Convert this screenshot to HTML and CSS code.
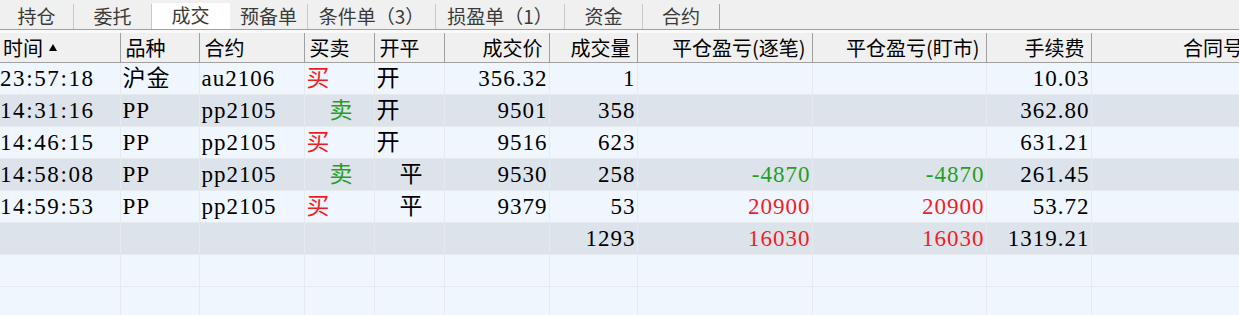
FILE: index.html
```html
<!DOCTYPE html>
<html lang="zh-CN">
    <head>
        <meta charset="UTF-8">
        <meta name="viewport" content="width=device-width, initial-scale=1.0">
        <title>成交</title>
        <link rel="stylesheet" href="styles.css">
    </head>
    <body>
        <nav class="tabs">
            <span class="tab w74">持仓</span>
            <span class="tab w78">委托</span>
            <span class="tab w78 active">成交</span>
            <span class="tab w78">预备单</span>
            <span class="tab w128">条件单（3）</span>
            <span class="tab w129">损盈单（1）</span>
            <span class="tab w78">资金</span>
            <span class="tab w77">合约</span>
        </nav>

        <table class="trades">
            <colgroup>
                <col style="width:120px">
                <col style="width:79px">
                <col style="width:105px">
                <col style="width:70px">
                <col style="width:70px">
                <col style="width:105px">
                <col style="width:88px">
                <col style="width:175px">
                <col style="width:174px">
                <col style="width:105px">
                <col style="width:158px">
            </colgroup>
            <thead>
                <tr>
                    <th>时间<i class="sort"></i></th>
                    <th>品种</th>
                    <th>合约</th>
                    <th>买卖</th>
                    <th>开平</th>
                    <th class="num">成交价</th>
                    <th class="num">成交量</th>
                    <th class="num">平仓盈亏(逐笔)</th>
                    <th class="num">平仓盈亏(盯市)</th>
                    <th class="num">手续费</th>
                    <th class="num">合同号</th>
                </tr>
            </thead>
            <tbody>
                <tr>
                    <td class="time">23:57:18</td>
                    <td>沪金</td>
                    <td>au2106</td>
                    <td class="buy">买</td>
                    <td>开</td>
                    <td class="num">356.32</td>
                    <td class="num">1</td>
                    <td class="num"></td>
                    <td class="num"></td>
                    <td class="num">10.03</td>
                    <td></td>
                </tr>
                <tr class="alt">
                    <td class="time">14:31:16</td>
                    <td>PP</td>
                    <td>pp2105</td>
                    <td class="sell">卖</td>
                    <td>开</td>
                    <td class="num">9501</td>
                    <td class="num">358</td>
                    <td class="num"></td>
                    <td class="num"></td>
                    <td class="num">362.80</td>
                    <td></td>
                </tr>
                <tr>
                    <td class="time">14:46:15</td>
                    <td>PP</td>
                    <td>pp2105</td>
                    <td class="buy">买</td>
                    <td>开</td>
                    <td class="num">9516</td>
                    <td class="num">623</td>
                    <td class="num"></td>
                    <td class="num"></td>
                    <td class="num">631.21</td>
                    <td></td>
                </tr>
                <tr class="alt">
                    <td class="time">14:58:08</td>
                    <td>PP</td>
                    <td>pp2105</td>
                    <td class="sell">卖</td>
                    <td class="close">平</td>
                    <td class="num">9530</td>
                    <td class="num">258</td>
                    <td class="num loss">-4870</td>
                    <td class="num loss">-4870</td>
                    <td class="num">261.45</td>
                    <td></td>
                </tr>
                <tr>
                    <td class="time">14:59:53</td>
                    <td>PP</td>
                    <td>pp2105</td>
                    <td class="buy">买</td>
                    <td class="close">平</td>
                    <td class="num">9379</td>
                    <td class="num">53</td>
                    <td class="num gain">20900</td>
                    <td class="num gain">20900</td>
                    <td class="num">53.72</td>
                    <td></td>
                </tr>
                <tr class="alt">
                    <td></td>
                    <td></td>
                    <td></td>
                    <td></td>
                    <td></td>
                    <td></td>
                    <td class="num">1293</td>
                    <td class="num gain">16030</td>
                    <td class="num gain">16030</td>
                    <td class="num">1319.21</td>
                    <td></td>
                </tr>
                <tr>
                    <td></td><td></td><td></td><td></td><td></td><td></td>
                    <td></td><td></td><td></td><td></td><td></td>
                </tr>
                <tr>
                    <td></td><td></td><td></td><td></td><td></td><td></td>
                    <td></td><td></td><td></td><td></td><td></td>
                </tr>
            </tbody>
        </table>
    </body>
</html>
```

FILE: styles.css
```css
:root{
    --tab-bg: #f0f0f0;
    --line-dark: #a0a0a0;
    --line-tab: #c8c8c8;
    --row-light: #eff6fd;
    --row-alt: #dde3ea;
    --cell-line: #e6e9ed;
    --red: #f41c24;
    --green: #1fa01f;
}
html, body{
    overflow: hidden;
}
body{
    margin: 0;
    padding: 0;
    width: 1239px;
    height: 315px;
    background: var(--row-light);
    font-family: "Noto Sans CJK SC", sans-serif;
}

.tabs{
    display: flex;
    align-items: flex-end;
    height: 29px;
    background: var(--tab-bg);
    border-bottom: 1px solid var(--line-dark);

    .tab{
        box-sizing: border-box;
        height: 25px;
        display: flex;
        justify-content: center;
        align-items: center;
        font-size: 19px;
        line-height: 22px;
        color: #3a3a3a;
        border-right: 1px solid var(--line-tab);
        padding-bottom: 2px;
        white-space: nowrap;

        &.active{
            height: 26px;
            background: #fff;
            border-right-color: #fff;
        }
        &:last-child{
            border-right-color: #a8a8a8;
        }
    }
    .w74{ width: 74px; }
    .w77{ width: 77px; }
    .w78{ width: 78px; }
    .w128{ width: 128px; }
    .w129{ width: 129px; }
}

.trades{
    table-layout: fixed;
    border-collapse: collapse;
    width: 1249px;

    th{
        height: 29px;
        padding: 0 6px 0 5px;
        background: var(--tab-bg);
        border-top: 3px solid #f9f9f9;
        border-right: 1px solid var(--line-dark);
        border-bottom: 1px solid var(--line-dark);
        font-size: 20px;
        font-weight: normal;
        color: #000;
        text-align: left;
        white-space: nowrap;
        overflow: hidden;
        line-height: 26px;

        &:first-child{
            padding-left: 3px;
        }
        &:last-child{
            border-right: none;
        }
    }

    td{
        height: 31px;
        padding: 0 2px;
        border-right: 1px solid var(--cell-line);
        border-bottom: 1px solid var(--cell-line);
        font-family: "Liberation Serif", "Noto Sans CJK SC", serif;
        font-size: 23px;
        line-height: 28px;
        letter-spacing: 1px;
        color: #000;
        white-space: nowrap;
        overflow: hidden;
    }

    .num{
        text-align: right;
    }
    td.num{
        padding-right: 1px;
    }
    td.time{
        padding-left: 0;
        letter-spacing: 1.6px;
    }
    td.buy{
        color: var(--red);
    }
    td.sell{
        color: var(--green);
        padding-left: 25px;
    }
    td.close{
        padding-left: 25px;
    }
    td.gain{
        color: var(--red);
    }
    td.loss{
        color: var(--green);
    }

    tbody tr{
        background: var(--row-light);

        &.alt{
            background: var(--row-alt);
        }
    }
}

.sort{
    display: inline-block;
    width: 0;
    height: 0;
    margin-left: 6px;
    vertical-align: 5px;
    border-left: 4px solid transparent;
    border-right: 4px solid transparent;
    border-bottom: 7px solid #000;
}
```
